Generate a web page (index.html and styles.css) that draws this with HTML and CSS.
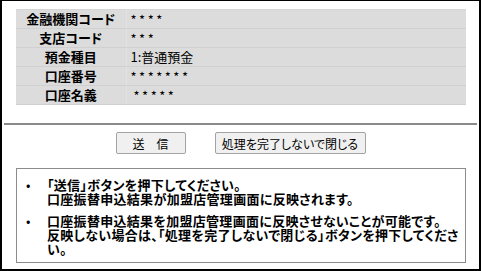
FILE: index.html
```html
<!DOCTYPE html>
<html lang="ja">
<head>
<meta charset="utf-8">
<title>口座振替申込結果</title>
<link rel="stylesheet" href="styles.css">
</head>
<body>
<div class="frame">
  <table class="info">
    <tr><th>金融機関コード</th><td class="mask">****</td></tr>
    <tr><th>支店コード</th><td class="mask">***</td></tr>
    <tr><th>預金種目</th><td>1:普通預金</td></tr>
    <tr><th>口座番号</th><td class="mask">*******</td></tr>
    <tr><th>口座名義</th><td class="mask indent">*****</td></tr>
  </table>
  <div class="rule"></div>
  <div class="actions">
    <button class="btn btn-send" type="button">送　信</button>
    <button class="btn btn-close" type="button">処理を完了しないで閉じる</button>
  </div>
  <div class="notes">
    <ul class="note-list">
      <li><span class="note-text">「送信」ボタンを押下してください。<br>口座振替申込結果が加盟店管理画面に反映されます。</span></li>
      <li><span class="note-text">口座振替申込結果を加盟店管理画面に反映させないことが可能です。<br>反映しない場合は、「処理を完了しないで閉じる」ボタンを押下してください。</span></li>
    </ul>
  </div>
</div>
</body>
</html>
```

FILE: styles.css
```css
* { box-sizing: border-box; }
html, body { margin: 0; padding: 0; background: #fff; }
body {
  font-family: "Noto Sans CJK JP", "Noto Sans", sans-serif;
  color: #000;
}
.frame {
  width: 481px;
  height: 271px;
  border: 2px solid #000;
  border-top-width: 1px;
  padding-top: 8px;
  overflow: hidden;
}
.info {
  margin-left: 14px;
  width: 450px;
  border-collapse: collapse;
  background: #dcdcdc;
  font-size: 13px;
  line-height: 18px;
}
.info th, .info td {
  height: 19px;
  padding: 0;
  border-bottom: 1px solid #d0d0d0;
  vertical-align: middle;
}
.info tr:first-child th, .info tr:first-child td { border-top: 1px solid #d6d6d6; }
.info th {
  width: 110px;
  font-weight: bold;
  text-align: center;
  border-right: 1px solid #e2e2e2;
  font-feature-settings: "palt";
}
.info td {
  padding-left: 4px;
  font-weight: normal;
  text-align: left;
}
.info td.mask {
  letter-spacing: 2.5px;
  line-height: 16px;
  padding-top: 2px;
}
.info td.indent { padding-left: 7px; }
.rule {
  margin: 18px 2px 0;
  height: 2px;
  background: #8a8a8a;
}
.actions {
  display: flex;
  justify-content: center;
  gap: 29px;
  margin-top: 7px;
}
.btn {
  height: 22px;
  padding: 0;
  font-family: "Noto Sans CJK JP", sans-serif;
  font-size: 12px;
  color: #000;
  background: #f0f0f0;
  border: 1px solid #a3a3a3;
  border-radius: 2px;
  font-feature-settings: "palt";
}
.btn-send { width: 70px; }
.btn-close { width: 151px; }
.notes {
  margin: 14px 0 0 14px;
  width: 450px;
  height: 95px;
  border: 1px solid #8c8c8c;
  padding: 9px 0 0 9px;
}
.note-list {
  list-style: none;
  margin: 0;
  padding: 0;
  font-size: 13px;
  line-height: 14px;
  font-weight: bold;
  font-feature-settings: "palt";
  letter-spacing: 0.3px;
}
.note-list li {
  display: flex;
}
.note-list li + li { margin-top: 8px; }
.note-list li::before {
  content: "•";
  flex: 0 0 21px;
  padding-left: 0;
  font-weight: normal;
}
.note-text { flex: 1 1 auto; min-width: 0; }
```
